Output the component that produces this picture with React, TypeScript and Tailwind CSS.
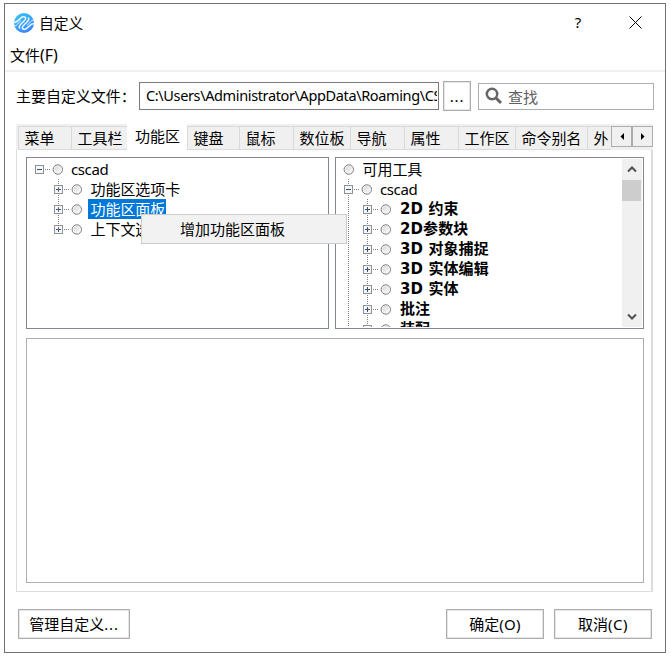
import React from "react";

const UI = "font-['Noto_Sans','Noto_Sans_CJK_SC',sans-serif]";
const BOLD = "font-['DejaVu_Sans','Noto_Sans_CJK_SC',sans-serif] font-bold";

type Row = { label: string; level: number; state?: "open" | "closed"; selected?: boolean; bold?: boolean };

const leftRows: Row[] = [
  { label: "cscad", level: 0, state: "open" },
  { label: "功能区选项卡", level: 1, state: "closed" },
  { label: "功能区面板", level: 1, state: "closed", selected: true },
  { label: "上下文选项卡", level: 1, state: "closed" },
];

const rightRows: Row[] = [
  { label: "可用工具", level: -1 },
  { label: "cscad", level: 0, state: "open" },
  { label: "2D 约束", level: 1, state: "closed", bold: true },
  { label: "2D参数块", level: 1, state: "closed", bold: true },
  { label: "3D 对象捕捉", level: 1, state: "closed", bold: true },
  { label: "3D 实体编辑", level: 1, state: "closed", bold: true },
  { label: "3D 实体", level: 1, state: "closed", bold: true },
  { label: "批注", level: 1, state: "closed", bold: true },
  { label: "装配", level: 1, state: "closed", bold: true },
];

function Expander({ open }: { open: boolean }) {
  return (
    <svg width="9" height="9" className="block shrink-0" shapeRendering="crispEdges">
      <rect x=".5" y=".5" width="8" height="8" fill="#f7f7f7" stroke="#919191" />
      <path d={open ? "M2 4.5h5" : "M2 4.5h5M4.5 2v5"} stroke="#33508f" />
    </svg>
  );
}

function Bullet() {
  return (
    <svg width="11" height="11" className="-ml-px block shrink-0">
      <defs>
        <linearGradient id="bullet" x1="0" y1="0" x2="1" y2="1">
          <stop offset="0" stopColor="#d8d8d8" />
          <stop offset="1" stopColor="#fafafa" />
        </linearGradient>
      </defs>
      <circle cx="5.8" cy="5.5" r="4.7" fill="#fff" stroke="#777" />
      <circle cx="5.8" cy="5.5" r="3.4" fill="url(#bullet)" />
    </svg>
  );
}

function TreeRow({ row, inset }: { row: Row; inset: number }) {
  return (
    <div className="flex h-5 shrink-0 items-center" style={{ paddingLeft: inset + Math.max(row.level, 0) * 19 }}>
      {row.state && <Expander open={row.state === "open"} />}
      {row.state && <span className="ml-px mr-[2px] h-px w-[6px] shrink-0 bg-[repeating-linear-gradient(90deg,#808080_0_1px,transparent_1px_2px)]" />}
      <Bullet />
      <div
        className={`ml-[6px] h-5 whitespace-nowrap pr-px leading-5 ${row.bold ? `${BOLD} pl-[3px] text-[15px] tracking-[0.1px]` : row.label === "cscad" ? "pl-[2px] text-[15px] tracking-[-0.4px]" : "pl-[2.5px] text-[15px] tracking-[-0.05px]"} ${row.selected ? "bg-[#0078d7] text-white" : ""}`}
      >
        {row.label}
      </div>
    </div>
  );
}

const dotsV = "absolute w-px bg-[repeating-linear-gradient(180deg,#808080_0_1px,transparent_1px_2px)]";

const tabs: { label: string; w: number }[] = [
  { label: "菜单", w: 53 },
  { label: "工具栏", w: 56 },
  { label: "功能区", w: 60 },
  { label: "键盘", w: 52 },
  { label: "鼠标", w: 54 },
  { label: "数位板", w: 57 },
  { label: "导航", w: 54 },
  { label: "属性", w: 54 },
  { label: "工作区", w: 57 },
  { label: "命令别名", w: 72 },
  { label: "外", w: 24 },
];

function Logo() {
  return (
    <svg width="20" height="20" viewBox="0 0 20 20" className="block">
      <defs>
        <linearGradient id="logo" x1="0" y1="0" x2=".6" y2="1">
          <stop offset="0" stopColor="#35c9f2" />
          <stop offset="1" stopColor="#3b86ff" />
        </linearGradient>
        <clipPath id="disc"><circle cx="10" cy="10" r="10" /></clipPath>
      </defs>
      <circle cx="10" cy="10" r="10" fill="url(#logo)" />
      <g clipPath="url(#disc)" fill="none" stroke="#e9f7ff" strokeWidth="1.5" strokeLinecap="round">
        <path d="M0 9.500C4 9.500 6 4.500 9 3.800c3-.6 3.500 1.700 1.500 3.700L7 11c-1.500 1.500-2.500 2.500-1.500 4" />
        <path d="M20 10.500c-4 0-6 5-9 5.700-3 .6-3.500-1.700-1.500-3.700L13 9c1.500-1.500 2.500-2.500 1.500-4" />
        <path d="M1 13c2-.5 3.500-3 5.500-5M19 7c-2 .5-3.500 3-5.500 5" strokeWidth="1" />
      </g>
    </svg>
  );
}

const btn = "flex h-[30px] items-center justify-center border border-[#adadad] bg-white tracking-normal shadow-[inset_0_0_0_1px_#e5e5e5]";
const arrowBtn = "flex h-[21px] items-center justify-center border border-[#adadad] bg-[#f0f0f0]";

export default function App() {
  return (
    <div className={`h-[657px] w-[670px] overflow-hidden whitespace-nowrap bg-white pl-1 pt-[3px] text-[15px] leading-5 tracking-[-0.05px] text-black ${UI}`}>
      <div className="flex h-[650px] w-[662px] flex-col border border-[#707070] bg-white">
        <div className="flex h-[37px] shrink-0 items-center pl-[9px]">
          <Logo />
          <span className="ml-[5px] text-[14.8px]">自定义</span>
          <span className="ml-auto w-2 text-center text-[15px] leading-none">?</span>
          <svg width="13" height="13" className="-mt-px ml-[47px] mr-[23px]"><path d="M.5.5l12 12M12.500.5l-12 12" stroke="#000" /></svg>
        </div>
        <div className="flex h-[31px] shrink-0 items-center border-b-2 border-[#f0f0f0] pb-px pl-[5px]">
          <span>文件<span className="text-[16px]">(F)</span></span>
        </div>
        <div className="flex h-[52px] shrink-0 items-start pl-[11px] pt-[9px]">
          <div className="mt-[5px] w-[123px]">主要自定义文件：</div>
          <div className="mt-px h-7 w-[300px] border border-[#7a7a7a] pl-[6px] pr-px">
            <div className="mt-[2px] overflow-hidden text-[14.5px] tracking-[-0.37px]">C:\Users\Administrator\AppData\Roaming\CS</div>
          </div>
          <div className={`ml-1 w-7 ${btn}`}><span className="tracking-[0.8px]">...</span></div>
          <div className="ml-[7px] mt-[2px] flex h-[27px] w-[176px] items-center border border-[#adadad] pl-[6px]">
            <svg width="18" height="18" className="mb-[2px]"><circle cx="7" cy="7" r="5.200" fill="none" stroke="#666" strokeWidth="2.500" /><path d="M11 11l5 5" stroke="#666" strokeWidth="3" /></svg>
            <span className="ml-[5px] text-[#606060]">查找</span>
          </div>
        </div>
        <div className="relative ml-[11px] flex h-[468px] w-[637px] shrink-0 flex-col">
          <div className="relative flex h-[26px] items-end overflow-hidden bg-[#f0f0f0] pl-[2px]">
            {tabs.map((t, i) => (
              <div key={t.label} style={{ width: t.w }} className={`flex shrink-0 items-center ${i === 2 ? "h-[26px] bg-white pb-[3px] pl-2" : "h-6 border-b border-l border-t border-[#d9d9d9] bg-[#f0f0f0] pl-[5.500px]"}`}>
                {t.label}
              </div>
            ))}
            <div className="absolute right-0 top-[2px] flex">
              <div className={`w-[21px] ${arrowBtn}`}><svg width="4" height="7" className="-mt-px"><path d="M4 0v7L.5 3.500z" /></svg></div>
              <div className={`w-[21px] ${arrowBtn}`}><svg width="4" height="7" className="-mt-px"><path d="M0 0v7l3.500-3.500z" /></svg></div>
            </div>
          </div>
          <div className="flex flex-1 flex-col border-b border-l border-r-2 border-[#dcdcdc] pl-[9px] pt-[7px]">
            <div className="flex gap-[6px]">
              <div className="relative h-[172px] w-[303px] overflow-hidden border border-[#828790] pt-px">
                <div className={`${dotsV} left-[31px] top-[21px] h-[52px]`} />
                {leftRows.map((r) => <TreeRow key={r.label} row={r} inset={8} />)}
              </div>
              <div className="relative h-[172px] w-[309px] overflow-hidden border border-[#828790] pt-px">
                <div className={`${dotsV} left-[12px] top-[21px] h-[148px]`} />
                <div className={`${dotsV} left-[31px] top-[41px] h-[128px]`} />
                <div className="relative flex h-[168px] flex-col overflow-hidden">
                  {rightRows.map((r) => <TreeRow key={r.label} row={r} inset={8} />)}
                </div>
                <div className="absolute right-px top-px flex h-[168px] w-5 flex-col items-center bg-[#f0f0f0]">
                  <svg width="10" height="8" className="mt-[6px]"><path d="M1 6.500l4-4 4 4" fill="none" stroke="#505050" strokeWidth="2" /></svg>
                  <div className="mt-[7px] h-[21px] w-[19px] self-start bg-[#cdcdcd]" />
                  <svg width="10" height="8" className="mb-[6px] mt-auto"><path d="M1 1.500l4 4 4-4" fill="none" stroke="#505050" strokeWidth="2" /></svg>
                </div>
              </div>
            </div>
            <div className="mt-[9px] h-[245px] w-[618px] border border-[#adadad] bg-white" />
          </div>
          <div className="absolute left-[125px] top-[90px] flex h-[30px] w-[206px] items-center border border-[#ccc] bg-[#f2f2f2] pl-[38px] tracking-normal">
            增加功能区面板
          </div>
        </div>
        <div className="flex pl-[13px] pt-[17px]">
          <div className={`w-[112px] ${btn}`}><span>管理自定义<span className="tracking-[0.8px]">...</span></span></div>
          <div className={`ml-[316px] w-[98px] ${btn}`}>确定<span className="tracking-[0.2px]">(O)</span></div>
          <div className={`ml-[10px] w-[98px] ${btn}`}>取消<span className="tracking-[0.5px]">(C)</span></div>
        </div>
      </div>
    </div>
  );
}
